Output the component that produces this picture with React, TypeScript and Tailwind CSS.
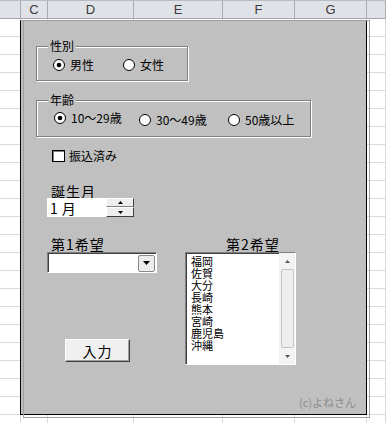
import React from "react";

const cols = [
  { w: 21, label: "" },
  { w: 27, label: "C" },
  { w: 86, label: "D" },
  { w: 89, label: "E" },
  { w: 72, label: "F" },
  { w: 72, label: "G" },
  { w: 19, label: "" },
];

const cjk = "font-['Noto_Sans_CJK_JP','Noto_Sans_CJK_SC',sans-serif]";

function Radio({ checked }: { checked?: boolean }) {
  return (
    <svg width="12" height="12" viewBox="0 0 12 12" className="shrink-0">
      <circle cx="6" cy="6" r="5.5" fill="#fff" stroke="#000" />
      {checked && <circle cx="6" cy="6" r="2.3" fill="#000" />}
    </svg>
  );
}

function Option({ label, checked, w, className = "" }: { label: string; checked?: boolean; w?: string; className?: string }) {
  return (
    <div className={`flex items-center gap-[5px] ${w ?? ""} ${className}`}>
      <Radio checked={checked} />
      <span className="text-[12px] leading-[12px] whitespace-nowrap">{label}</span>
    </div>
  );
}

function Frame({ title, className, children }: { title: string; className: string; children: React.ReactNode }) {
  return (
    <div
      className={`relative border border-[#808080] shadow-[1px_1px_0_#fff,inset_1px_1px_0_#fff] ${className}`}
    >
      <span className="absolute left-[11px] top-[-7px] bg-[#c0c0c0] px-[2px] text-[12px] leading-[12px]">
        {title}
      </span>
      {children}
    </div>
  );
}

function Tri({ up }: { up?: boolean }) {
  return (
    <svg width="5" height="3" viewBox="0 0 5 3">
      <polygon points={up ? "2.5,0 5,3 0,3" : "0,0 5,0 2.5,3"} fill="#000" />
    </svg>
  );
}

const prefs = ["福岡", "佐賀", "大分", "長崎", "熊本", "宮崎", "鹿児島", "沖縄"];

export default function App() {
  return (
    <div className="relative w-[386px] h-[423px] overflow-hidden bg-white">
      {/* column header */}
      <div className="flex h-[19px] bg-[#dfe2e6] border-b border-[#a3a7ad] border-t border-t-[#b9bcc1]">
        {cols.map((c, i) => (
          <div
            key={i}
            style={{ width: c.w }}
            className="shrink-0 border-r border-[#a9adb2] flex items-center justify-center font-['Liberation_Sans',sans-serif] text-[13px] text-[#3a3a3a] leading-none"
          >
            {c.label}
          </div>
        ))}
      </div>

      {/* grid */}
      <div className="flex flex-col">
        {Array.from({ length: 23 }).map((_, r) => (
          <div key={r} className="flex h-[18px] border-b border-[#d9d9d9]">
            {cols.map((c, i) => (
              <div key={i} style={{ width: c.w }} className="shrink-0 border-r border-[#d9d9d9]" />
            ))}
          </div>
        ))}
      </div>

      {/* user form */}
      <div
        className={`absolute left-[20px] top-[20px] w-[347px] h-[395px] bg-[#c0c0c0] border-x border-b border-black border-t border-t-[#a0a0a0] ${cjk} text-black`}
      >
        <div className="flex flex-col items-start pl-[15px] pt-[25px]">
          <Frame title="性別" className="w-[152px] h-[35px] flex items-center pl-[16px] pt-[2px]">
            <Option label="男性" checked w="w-[70px]" />
            <Option label="女性" />
          </Frame>

          <Frame title="年齢" className="mt-[19px] w-[275px] h-[37px] flex items-start pl-[17px] pt-[11px]">
            <Option label="10〜29歳" checked w="w-[85px]" />
            <Option label="30〜49歳" w="w-[89px]" className="mt-[2px]" />
            <Option label="50歳以上" className="mt-[2px]" />
          </Frame>

          <div className="mt-[13px] ml-[16px] flex items-center gap-[4px]">
            <div className="w-[13px] h-[12px] bg-white border border-black shadow-[inset_1px_1px_0_#808080]" />
            <span className="text-[12px] leading-[12px]">振込済み</span>
          </div>

          <div className="mt-[22px] ml-[15px] text-[14px] leading-[14px] tracking-[1px]">誕生月</div>

          <div className="ml-[11px] flex h-[19px]">
            <div className="w-[59px] bg-white flex items-end pl-[3px] pb-[1px] text-[14px] leading-[15px] tracking-[4px]">
              1月
            </div>
            <div className="w-[28px] flex flex-col">
              <div className="h-[9px] bg-[#eeeeee] border border-t-white border-l-white border-r-[#404040] border-b-[#808080] flex items-center justify-center">
                <Tri up />
              </div>
              <div className="h-[10px] bg-[#eeeeee] border border-t-white border-l-white border-r-[#404040] border-b-[#404040] flex items-center justify-center">
                <Tri />
              </div>
            </div>
          </div>

          <div className="mt-[20px] ml-[11px] flex items-start">
            {/* 第1希望 */}
            <div className="w-[110px] flex flex-col">
              <div className="pl-[4px] text-[14px] leading-[15px] tracking-[1px]">第1希望</div>
              <div className="h-[21px] bg-white border border-t-[#808080] border-l-[#808080] border-r-white border-b-white shadow-[inset_1px_1px_0_#404040] flex justify-end items-center pr-[1px]">
                <div className="w-[17px] h-[17px] mt-[1px] rounded-[2px] bg-[#ececec] border border-[#8a8a8a] flex items-center justify-center">
                  <svg width="7" height="4" viewBox="0 0 7 4">
                    <polygon points="0,0 7,0 3.5,4" fill="#000" />
                  </svg>
                </div>
              </div>
              <button className="mt-[66px] ml-[18px] w-[65px] h-[23px] bg-[#f0f0f0] border border-t-white border-l-white border-r-[#404040] border-b-[#404040] shadow-[inset_-1px_-1px_0_#a0a0a0] text-[14px] leading-[14px] tracking-[1px]">
                入力
              </button>
            </div>

            {/* 第2希望 */}
            <div className="ml-[28px] w-[111px] flex flex-col">
              <div className="pl-[41px] text-[14px] leading-[15px] tracking-[1px]">第2希望</div>
              <div className="h-[113px] bg-white border border-t-[#808080] border-l-[#808080] border-r-white border-b-white shadow-[inset_1px_1px_0_#404040] flex">
                <div className="flex-1 flex flex-col pl-[5px] pt-[2px]">
                  {prefs.map((p) => (
                    <div key={p} className="text-[11px] leading-[12px] whitespace-nowrap">
                      {p}
                    </div>
                  ))}
                </div>
                <div className="w-[16px] bg-[#f3f3f3] flex flex-col items-center">
                  <div className="h-[16px] flex items-center justify-center">
                    <svg width="5" height="3" viewBox="0 0 5 3">
                      <polygon points="2.5,0 5,3 0,3" fill="#555" />
                    </svg>
                  </div>
                  <div className="flex-1 w-[13px] rounded-[2px] border border-[#c4c4c4] bg-[#eeeeee]" />
                  <div className="h-[16px] flex items-center justify-center">
                    <svg width="5" height="3" viewBox="0 0 5 3">
                      <polygon points="0,0 5,0 2.5,3" fill="#555" />
                    </svg>
                  </div>
                </div>
              </div>
            </div>
          </div>

          <div className="mt-[32px] ml-[263px] text-[11px] leading-[11px] text-[#8c8c8c] whitespace-nowrap">
            (c)よねさん
          </div>
        </div>
      </div>

      {/* selection outline */}
      <div className="absolute left-[23px] top-[20px] w-[347px] h-[398px] border border-[#a0a0a0] pointer-events-none" />
    </div>
  );
}
